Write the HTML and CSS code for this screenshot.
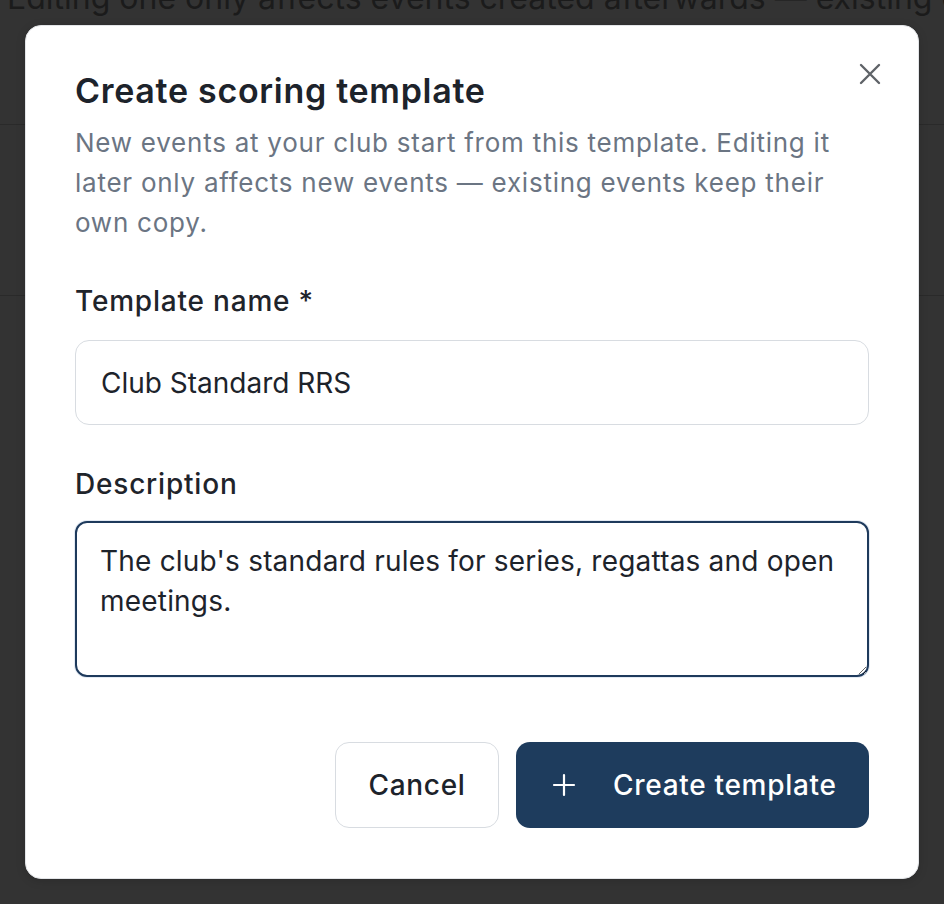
FILE: index.html
```html
<!DOCTYPE html>
<html>
<head>
    <title>Create scoring template</title>
    <link rel="stylesheet" href="styles.css">
</head>
<body>

    <div class="page">
        <p class="pageNote">Editing one only affects events created afterwards — existing events keep their own copy.</p>
        <div class="pageRow"></div>
        <div class="pageRow tall"></div>
    </div>

    <div class="modal">
        <button class="close" aria-label="Close">
            <svg width="22" height="22" viewBox="0 0 22 22" fill="none" stroke="#5f6368" stroke-width="2.4" stroke-linecap="round">
                <path d="M2 2 L20 20 M20 2 L2 20"/>
            </svg>
        </button>

        <h2 class="title">Create scoring template</h2>
        <p class="intro">New events at your club start from this template. Editing it later only affects new events — existing events keep their own copy.</p>

        <label class="label" for="name">Template name *</label>
        <input class="field" id="name" type="text" value="Club Standard RRS">

        <label class="label second" for="desc">Description</label>
        <textarea class="field area" id="desc">The club's standard rules for series, regattas and open meetings.</textarea>

        <div class="actions">
            <button class="btn cancel">Cancel</button>
            <button class="btn primary">
                <svg width="24" height="24" viewBox="0 0 24 24" fill="none" stroke="#fff" stroke-width="2.2" stroke-linecap="round">
                    <path d="M12 2 V22 M2 12 H22"/>
                </svg>
                <span>Create template</span>
            </button>
        </div>
    </div>

</body>
</html>
```

FILE: styles.css
```css
html,
body {
    margin: 0;
    height: 100%;
}

body {
    background: #333333;
    font-family: Inter, "Noto Sans", sans-serif;
    overflow: hidden;
}

/* page behind the overlay */
.page {
    margin-top: -24px;
}

.pageNote {
    margin: 0;
    padding-left: 7px;
    font-size: 32px;
    line-height: 44px;
    color: #1b1b1b;
    white-space: nowrap;
}

.pageRow {
    height: 104px;
    border-bottom: 1px solid #2a2a2a;
}

.pageRow.tall {
    height: 170px;
}

/* dialog */
.modal {
    position: absolute;
    top: 25px;
    left: 25px;
    width: 894px;
    height: 854px;
    box-sizing: border-box;
    padding: 45px 49px 50px 49px;
    background: #fff;
    border: 1px solid #e3e5e8;
    border-radius: 16px;
    box-shadow: 0 2px 10px rgba(0, 0, 0, 0.15);
    display: flex;
    flex-direction: column;
}

.close {
    position: absolute;
    top: 37px;
    right: 37px;
    width: 22px;
    height: 22px;
    padding: 0;
    border: 0;
    background: none;
}

.title {
    margin: 0;
    font-size: 34px;
    font-weight: 600;
    line-height: 40px;
    color: #1d232b;
    letter-spacing: 0.7px;
}

.intro {
    margin: 12px 0 0;
    font-size: 26px;
    line-height: 40px;
    color: #6b7583;
    letter-spacing: 0.75px;
    max-width: 790px;
}

.label {
    margin-top: 38px;
    font-size: 28px;
    font-weight: 500;
    line-height: 40px;
    color: #1f242b;
    letter-spacing: 0.8px;
}

.label.second {
    margin-top: 39px;
}

.field {
    box-sizing: border-box;
    width: 100%;
    height: 86px;
    margin-top: 19px;
    padding: 0 25px;
    font-family: inherit;
    font-size: 28px;
    color: #1d232b;
    border: 1px solid #d8dce1;
    border-radius: 14px;
    background: #fff;
    outline: none;
}

.area {
    height: 157px;
    margin-top: 17px;
    padding: 18px 23px;
    line-height: 40px;
    letter-spacing: 0.2px;
    border: 2px solid #1e3a5c;
    border-radius: 12px;
    box-shadow: 0 0 0 1px #e3eaf3;
    resize: vertical;
}

.actions {
    display: flex;
    justify-content: flex-end;
    gap: 17px;
    margin-top: 65px;
}

.btn {
    height: 86px;
    border-radius: 14px;
    font-family: inherit;
    font-size: 28px;
    font-weight: 500;
    letter-spacing: 0.7px;
}

.cancel {
    width: 164px;
    background: #fff;
    color: #1d232b;
    border: 1px solid #d8dce1;
}

.primary {
    width: 353px;
    display: flex;
    align-items: center;
    gap: 37px;
    padding: 0 0 0 36px;
    background: #1e3c5d;
    color: #fff;
    border: 0;
}
```
